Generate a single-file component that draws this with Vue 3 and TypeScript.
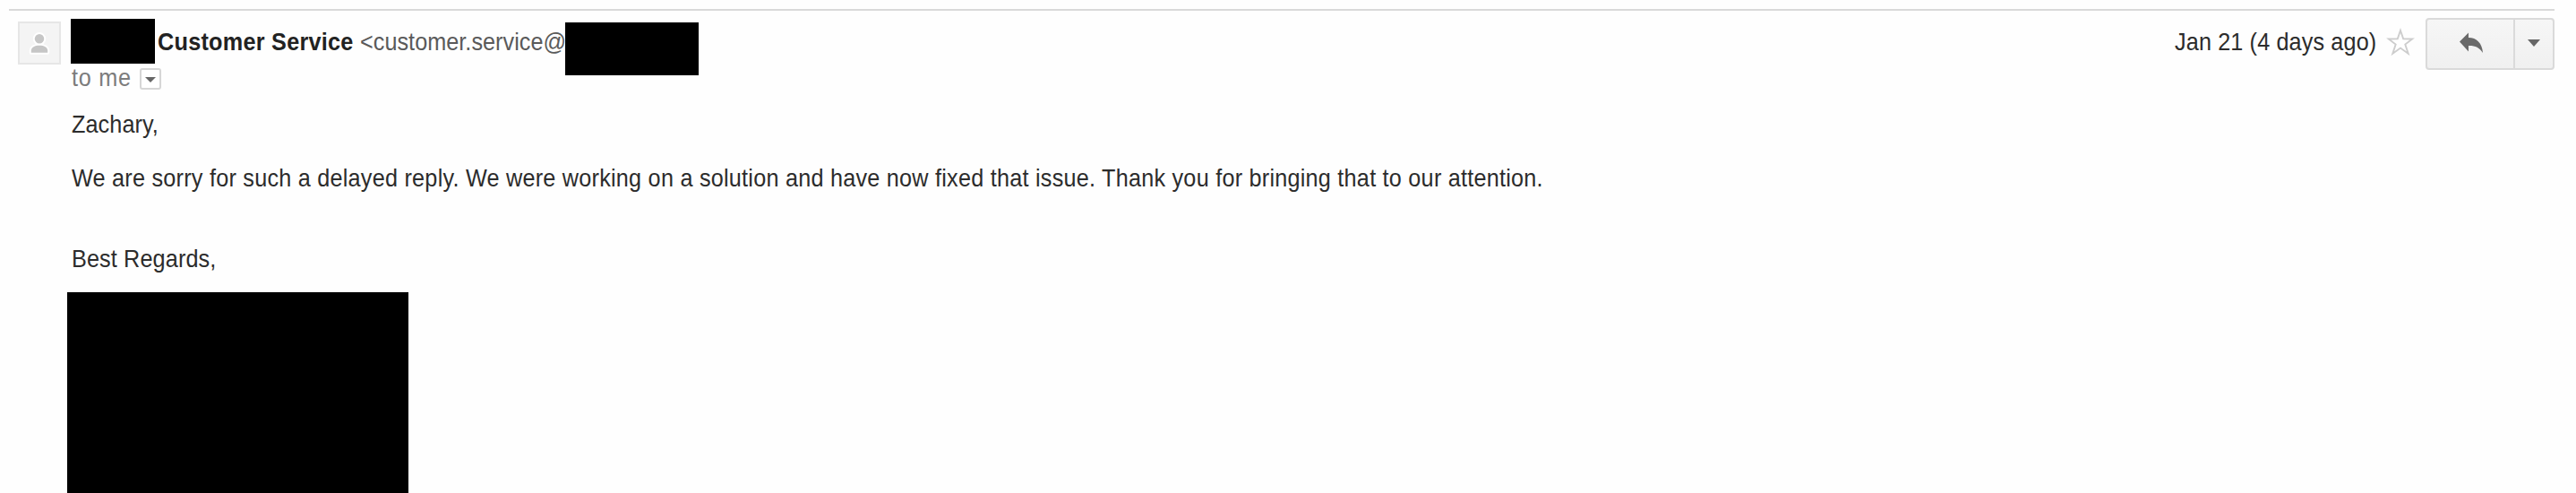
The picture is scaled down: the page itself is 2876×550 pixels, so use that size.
<script setup lang="ts">
interface Message {
  sender: string
  address: string
  recipient: string
  date: string
  greeting: string
  body: string
  closing: string
}

const message: Message = {
  sender: 'Customer Service',
  address: '<customer.service@',
  recipient: 'to me',
  date: 'Jan 21 (4 days ago)',
  greeting: 'Zachary,',
  body: 'We are sorry for such a delayed reply. We were working on a solution and have now fixed that issue. Thank you for bringing that to our attention.',
  closing: 'Best Regards,',
}
</script>

<template>
  <article class="message">
    <header class="header">
      <div class="avatar">
        <svg viewBox="0 0 48 48" width="48" height="48">
          <g stroke="#fff" stroke-width="4" stroke-linejoin="round" fill="#c6c6c6" paint-order="stroke">
            <circle cx="24" cy="19.3" r="5.2" />
            <path d="M14.8 34.8V32.5C14.8 28.8 19 26.8 24 26.8S33.2 28.8 33.2 32.5V34.8Z" />
          </g>
        </svg>
      </div>
      <div class="details">
        <div class="from">
          <span class="redacted name-block"></span>
          <span class="sender"><span class="text">{{ message.sender }}</span></span>
          <span class="address"><span class="text">{{ message.address }}</span></span>
          <span class="redacted domain-block"></span>
        </div>
        <div class="to">
          <span class="recipient"><span class="text">{{ message.recipient }}</span></span>
          <button class="more" aria-label="Show details">
            <svg viewBox="0 0 12 6" width="12" height="6"><path d="M0 0H12L6 6Z" fill="#666" /></svg>
          </button>
        </div>
      </div>
      <div class="tools">
        <span class="date"><span class="text">{{ message.date }}</span></span>
        <svg class="star" viewBox="0 0 32 32" width="32" height="32">
          <path d="M16 3L19.2 12.3L29.2 12.5L21.3 18.5L24.7 28.8L16 22.6L7.3 28.8L10.7 18.5L2.8 12.5L12.8 12.3Z" fill="#fff" stroke="#cdcdcd" stroke-width="1.9" />
        </svg>
        <div class="actions">
          <button class="reply" aria-label="Reply">
            <svg viewBox="0 0 28 24" width="28" height="24">
              <path d="M1 10.5L11 .5V6C20 6 26.3 12 27 23C23 16.8 18.5 14.8 11 15V21.5Z" fill="#6a6a6a" />
            </svg>
          </button>
          <button class="menu" aria-label="More">
            <svg viewBox="0 0 14 8" width="14" height="8"><path d="M0 0H14L7 8Z" fill="#666" /></svg>
          </button>
        </div>
      </div>
    </header>
    <div class="content">
      <p class="greeting"><span class="text">{{ message.greeting }}</span></p>
      <p class="body"><span class="text">{{ message.body }}</span></p>
      <p class="closing"><span class="text">{{ message.closing }}</span></p>
      <div class="redacted signature"></div>
    </div>
  </article>
</template>

<style>
body {
  margin: 0;
  background: #fff;
}
</style>

<style scoped>
.message {
  box-sizing: border-box;
  width: 2876px;
  height: 550px;
  padding: 10px 24px 0 10px;
  overflow: hidden;
  background: #fefefe;
  color: #2c2c2c;
  font: 28px/32px "Liberation Sans", Arial, sans-serif;
}
.header {
  box-sizing: border-box;
  display: flex;
  align-items: flex-start;
  height: 112px;
  padding-left: 10px;
  border-top: 2px solid #d9d9d9;
}
.text {
  display: inline-block;
  white-space: nowrap;
  transform-origin: 0 50%;
  transform: translateY(1px) scaleX(0.9);
}
.redacted {
  flex: none;
  background: #000;
}
.avatar {
  box-sizing: border-box;
  width: 48px;
  height: 48px;
  margin-top: 12px;
  border: 2px solid #e6e6e6;
  background: #f4f4f4;
}
.avatar svg {
  display: block;
  margin: -2px;
}
.details {
  margin: 9px 0 0 11px;
}
.from {
  display: flex;
  align-items: flex-start;
  height: 49px;
}
.name-block {
  width: 94px;
  height: 50px;
}
.sender {
  box-sizing: border-box;
  width: 227px;
  padding: 9px 0 0 3px;
  color: #222;
  font-weight: bold;
  letter-spacing: 0.3px;
}
.address {
  box-sizing: border-box;
  width: 231px;
  padding: 9px 0 0 2px;
  color: #5a5a5a;
  letter-spacing: 0.05px;
}
.domain-block {
  width: 149px;
  height: 59px;
  margin-top: 4px;
}
.to {
  display: flex;
  align-items: flex-start;
  color: #7c7c7c;
}
.recipient {
  box-sizing: border-box;
  width: 77px;
  padding-left: 1px;
  letter-spacing: 0.8px;
}
.recipient .text {
  margin-right: -10px;
}
button {
  display: flex;
  align-items: center;
  justify-content: center;
  box-sizing: border-box;
  margin: 0;
  padding: 0;
  border: 0;
  background: none;
}
.more {
  width: 24px;
  height: 24px;
  margin-top: 6px;
  border: 2px solid #d6d6d6;
  border-radius: 3px;
  background: #fff;
}
.more svg {
  margin-top: 2px;
}
.tools {
  display: flex;
  align-items: flex-start;
  margin-left: auto;
  padding-top: 8px;
}
.date {
  width: 236px;
  padding-top: 10px;
  letter-spacing: 0.15px;
}
.star {
  margin: 11px 12px 0 0;
}
.actions {
  box-sizing: border-box;
  display: flex;
  width: 144px;
  height: 58px;
  border: 2px solid #dadada;
  border-radius: 4px;
  background: linear-gradient(#f6f6f6, #f0f0f0);
}
.reply {
  width: 98px;
  border-right: 2px solid #dadada;
}
.reply svg {
  margin: 0 0 2px 2px;
}
.menu {
  flex: 1;
}
.menu svg {
  margin-bottom: 2px;
}
.content {
  padding-left: 69px;
}
p {
  margin: 0;
  padding-left: 1px;
}
.greeting {
  letter-spacing: 0.1px;
}
.body {
  margin-top: 28px;
  letter-spacing: 0.27px;
}
.closing {
  margin-top: 58px;
  letter-spacing: 0.15px;
}
.signature {
  width: 381px;
  height: 224px;
  margin: 22px 0 0 -4px;
}
</style>
